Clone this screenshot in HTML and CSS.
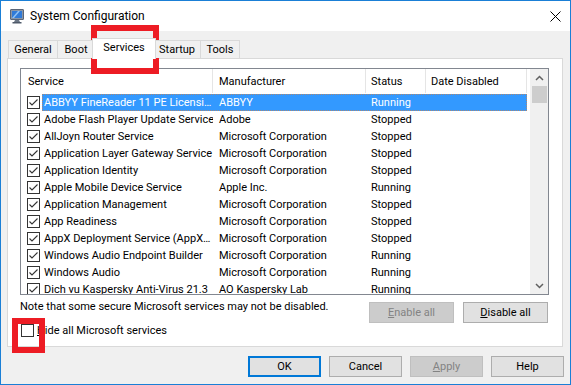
FILE: index.html
```html
<!DOCTYPE html>
<html>
<head>
<meta charset="utf-8">
<title>System Configuration</title>
<link rel="stylesheet" href="styles.css">
</head>
<body>
<div class="window">
  <div class="titlebar">
    <svg class="app-icon" width="16" height="16" viewBox="0 0 16 16">
      <rect x="1.5" y="1.5" width="13" height="10" rx="0.5" fill="#8a96a6" stroke="#5a6678"/>
      <rect x="3" y="3" width="10" height="7" fill="#2f7ad8"/>
      <path d="M3 10 L9 3 L11 3 L5 10 Z" fill="#8fc2f5"/>
      <path d="M6 12 L10 12 L11 14 L5 14 Z" fill="#6a7585"/>
      <rect x="3.5" y="14" width="9" height="1.5" fill="#4f5a6a"/>
    </svg>
    <span class="title">System Configuration</span>
    <svg class="close" width="11" height="11" viewBox="0 0 11 11">
      <path d="M0.5 0.5 L10.5 10.5 M10.5 0.5 L0.5 10.5" stroke="#000" stroke-width="1"/>
    </svg>
  </div>

  <div class="tabstrip">
    <div class="tab tab-general">General</div>
    <div class="tab tab-boot">Boot</div>
    <div class="tab tab-services selected">Services</div>
    <div class="tab tab-startup">Startup</div>
    <div class="tab tab-tools">Tools</div>
  </div>

  <div class="panel">
    <div class="listbox">
      <div class="list">
        <div class="header">
          <div class="hcell h1">Service</div>
          <div class="hcell h2">Manufacturer</div>
          <div class="hcell h3">Status</div>
          <div class="hcell h4">Date Disabled</div>
        </div>
        <div class="rows">
          <div class="row selected">
            <div class="cb-cell"><span class="cb checked"></span></div>
            <div class="cells"><span class="c1">ABBYY FineReader 11 PE Licensi…</span><span class="c2">ABBYY</span><span class="c3">Running</span><span class="c4"></span></div>
          </div>
          <div class="row">
            <div class="cb-cell"><span class="cb checked"></span></div>
            <div class="cells"><span class="c1">Adobe Flash Player Update Service</span><span class="c2">Adobe</span><span class="c3">Stopped</span><span class="c4"></span></div>
          </div>
          <div class="row">
            <div class="cb-cell"><span class="cb checked"></span></div>
            <div class="cells"><span class="c1">AllJoyn Router Service</span><span class="c2">Microsoft Corporation</span><span class="c3">Stopped</span><span class="c4"></span></div>
          </div>
          <div class="row">
            <div class="cb-cell"><span class="cb checked"></span></div>
            <div class="cells"><span class="c1">Application Layer Gateway Service</span><span class="c2">Microsoft Corporation</span><span class="c3">Stopped</span><span class="c4"></span></div>
          </div>
          <div class="row">
            <div class="cb-cell"><span class="cb checked"></span></div>
            <div class="cells"><span class="c1">Application Identity</span><span class="c2">Microsoft Corporation</span><span class="c3">Stopped</span><span class="c4"></span></div>
          </div>
          <div class="row">
            <div class="cb-cell"><span class="cb checked"></span></div>
            <div class="cells"><span class="c1">Apple Mobile Device Service</span><span class="c2">Apple Inc.</span><span class="c3">Running</span><span class="c4"></span></div>
          </div>
          <div class="row">
            <div class="cb-cell"><span class="cb checked"></span></div>
            <div class="cells"><span class="c1">Application Management</span><span class="c2">Microsoft Corporation</span><span class="c3">Stopped</span><span class="c4"></span></div>
          </div>
          <div class="row">
            <div class="cb-cell"><span class="cb checked"></span></div>
            <div class="cells"><span class="c1">App Readiness</span><span class="c2">Microsoft Corporation</span><span class="c3">Stopped</span><span class="c4"></span></div>
          </div>
          <div class="row">
            <div class="cb-cell"><span class="cb checked"></span></div>
            <div class="cells"><span class="c1">AppX Deployment Service (AppX…</span><span class="c2">Microsoft Corporation</span><span class="c3">Stopped</span><span class="c4"></span></div>
          </div>
          <div class="row">
            <div class="cb-cell"><span class="cb checked"></span></div>
            <div class="cells"><span class="c1">Windows Audio Endpoint Builder</span><span class="c2">Microsoft Corporation</span><span class="c3">Running</span><span class="c4"></span></div>
          </div>
          <div class="row">
            <div class="cb-cell"><span class="cb checked"></span></div>
            <div class="cells"><span class="c1">Windows Audio</span><span class="c2">Microsoft Corporation</span><span class="c3">Running</span><span class="c4"></span></div>
          </div>
          <div class="row">
            <div class="cb-cell"><span class="cb checked"></span></div>
            <div class="cells"><span class="c1">Dich vu Kaspersky Anti-Virus 21.3</span><span class="c2">AO Kaspersky Lab</span><span class="c3">Running</span><span class="c4"></span></div>
          </div>
        </div>
      </div>
      <div class="scrollbar">
        <div class="sb-btn">
          <svg width="9" height="6" viewBox="0 0 9 6"><path d="M1 5 L4.5 1.5 L8 5" fill="none" stroke="#606060" stroke-width="1.5"/></svg>
        </div>
        <div class="sb-thumb"></div>
        <div class="sb-track"></div>
        <div class="sb-btn">
          <svg width="9" height="6" viewBox="0 0 9 6"><path d="M1 1 L4.5 4.5 L8 1" fill="none" stroke="#606060" stroke-width="1.5"/></svg>
        </div>
      </div>
    </div>

    <div class="actions">
      <div class="note">Note that some secure Microsoft services may not be disabled.</div>
      <div class="action-buttons">
        <button class="btn disabled wide"><u>E</u>nable all</button>
        <button class="btn wide"><u>D</u>isable all</button>
      </div>
    </div>

    <label class="hide-row">
      <span class="cb"></span>
      <span class="hide-text"><u>H</u>ide all Microsoft services</span>
    </label>
  </div>

  <div class="dialog-buttons">
    <button class="btn default">OK</button>
    <button class="btn">Cancel</button>
    <button class="btn disabled"><u>A</u>pply</button>
    <button class="btn">Help</button>
  </div>

  <div class="mark mark-tab"></div>
  <div class="mark mark-check"></div>
</div>
</body>
</html>
```

FILE: styles.css
```css
html, body {
  margin: 0;
  padding: 0;
  background: #ffffff;
}

.window {
  position: relative;
  width: 571px;
  height: 385px;
  box-sizing: border-box;
  border: 1px solid #1a7fd6;
  background: #f0f0f0;
  display: flex;
  flex-direction: column;
  font-family: Roboto, "Liberation Sans", sans-serif;
  font-size: 11px;
  color: #000;
  overflow: hidden;
}

/* Title bar */
.titlebar {
  height: 30px;
  flex: none;
  background: #fff;
  display: flex;
  align-items: center;
  padding-left: 8px;
}
.app-icon {
  flex: none;
}
.title {
  margin-left: 5px;
  font-size: 12px;
  line-height: 16px;
}
.close {
  margin-left: auto;
  margin-right: 9px;
}

/* Tabs */
.tabstrip {
  flex: none;
  display: flex;
  align-items: flex-end;
  height: 21px;
  margin: 7px 0 -1px 7px;
  position: relative;
  z-index: 1;
}
.tab {
  box-sizing: border-box;
  height: 18px;
  margin-bottom: 1px;
  margin-right: -1px;
  padding-top: 1px;
  border: 1px solid #d9d9d9;
  border-bottom: none;
  background: #f0f0f0;
  text-align: center;
  line-height: 16px;
}
.tab-general { width: 50px; }
.tab-boot { width: 38px; }
.tab-services { width: 64px; }
.tab-startup { width: 48px; }
.tab-tools { width: 40px; }
.tab.selected {
  height: 21px;
  margin-bottom: 0;
  margin-left: -2px;
  margin-right: -3px;
  padding-top: 0;
  background: #fff;
  position: relative;
  z-index: 2;
  line-height: 18px;
}

/* Panel */
.panel {
  flex: none;
  box-sizing: border-box;
  width: 556px;
  height: 289px;
  margin-left: 6px;
  border: 1px solid #d9d9d9;
  background: #fff;
  padding: 9px 0 0 12px;
}

.listbox {
  box-sizing: border-box;
  width: 529px;
  height: 227px;
  border: 1px solid #828790;
  display: flex;
  overflow: hidden;
}
.list {
  width: 509px;
  flex: none;
  overflow: hidden;
}
.header {
  display: flex;
  height: 25px;
}
.hcell {
  box-sizing: border-box;
  height: 24px;
  line-height: 25px;
  border-right: 1px solid #e5e5e5;
  white-space: nowrap;
  overflow: hidden;
}
.h1 { width: 192px; padding-left: 7px; }
.h2 { width: 153px; padding-left: 6px; }
.h3 { width: 60px; padding-left: 5px; }
.h4 { width: 101px; padding-left: 5px; }

.row {
  display: flex;
  height: 17px;
}
.cb-cell {
  width: 21px;
  flex: none;
  display: flex;
  align-items: center;
  padding-left: 6px;
  box-sizing: border-box;
}
.cb {
  display: inline-block;
  box-sizing: border-box;
  width: 13px;
  height: 13px;
  border: 1px solid #333;
  background: #fff;
  flex: none;
}
.cb.checked {
  background: #fff url("data:image/svg+xml;utf8,<svg xmlns='http://www.w3.org/2000/svg' width='11' height='11' viewBox='0 0 11 11'><path d='M1.5 5.5 L4 8 L9.5 2.5' fill='none' stroke='%23333' stroke-width='1.1'/></svg>") no-repeat center;
}
.cells {
  display: flex;
  width: 485px;
  flex: none;
  box-sizing: border-box;
  line-height: 17px;
  white-space: nowrap;
}
.cells span {
  box-sizing: border-box;
  overflow: hidden;
  flex: none;
}
.c1 { width: 171px; padding-left: 2px; }
.c2 { width: 153px; padding-left: 6px; }
.c3 { width: 60px; padding-left: 5px; }
.c4 { width: 101px; }

.row.selected .cells {
  background: #3399ff;
  color: #fff;
  outline: 1px dotted rgba(220, 130, 60, 0.7);
  outline-offset: -1px;
}

.scrollbar {
  width: 18px;
  flex: none;
  background: #f0f0f0;
  display: flex;
  flex-direction: column;
  align-items: center;
}
.sb-btn {
  height: 17px;
  width: 100%;
  display: flex;
  align-items: center;
  justify-content: center;
  flex: none;
}
.sb-thumb {
  width: 15px;
  height: 17px;
  background: #cdcdcd;
  flex: none;
}
.sb-track {
  flex: 1;
}

/* Actions under list */
.actions {
  width: 529px;
  display: flex;
  justify-content: space-between;
  align-items: flex-start;
  margin-top: 4px;
}
.note {
  line-height: 16px;
  white-space: nowrap;
}
.action-buttons {
  display: flex;
  gap: 9px;
  margin-top: 3px;
  margin-right: 1px;
}

.btn {
  box-sizing: border-box;
  width: 73px;
  height: 21px;
  padding: 0;
  border: 1px solid #adadad;
  background: #e1e1e1;
  font-family: inherit;
  font-size: 11px;
  color: #000;
  line-height: 17px;
}
.btn.wide { width: 85px; }
.btn.disabled {
  background: #cccccc;
  border-color: #bfbfbf;
  color: #838383;
}
.btn.default {
  border: 2px solid #0078d7;
}

.hide-row {
  display: flex;
  align-items: center;
  height: 13px;
  margin-top: 1px;
  padding-left: 1px;
}
.hide-text {
  margin-left: 3px;
  line-height: 16px;
}

/* Dialog buttons */
.dialog-buttons {
  flex: none;
  display: flex;
  justify-content: flex-end;
  gap: 8px;
  margin-top: 9px;
  margin-right: 6px;
}

/* Red annotation boxes */
.mark {
  position: absolute;
  box-sizing: border-box;
  border: 6px solid #ed1c24;
}
.mark-tab {
  left: 90px;
  top: 24px;
  width: 68px;
  height: 49px;
}
.mark-check {
  left: 11px;
  top: 317px;
  width: 33px;
  height: 35px;
}
```
